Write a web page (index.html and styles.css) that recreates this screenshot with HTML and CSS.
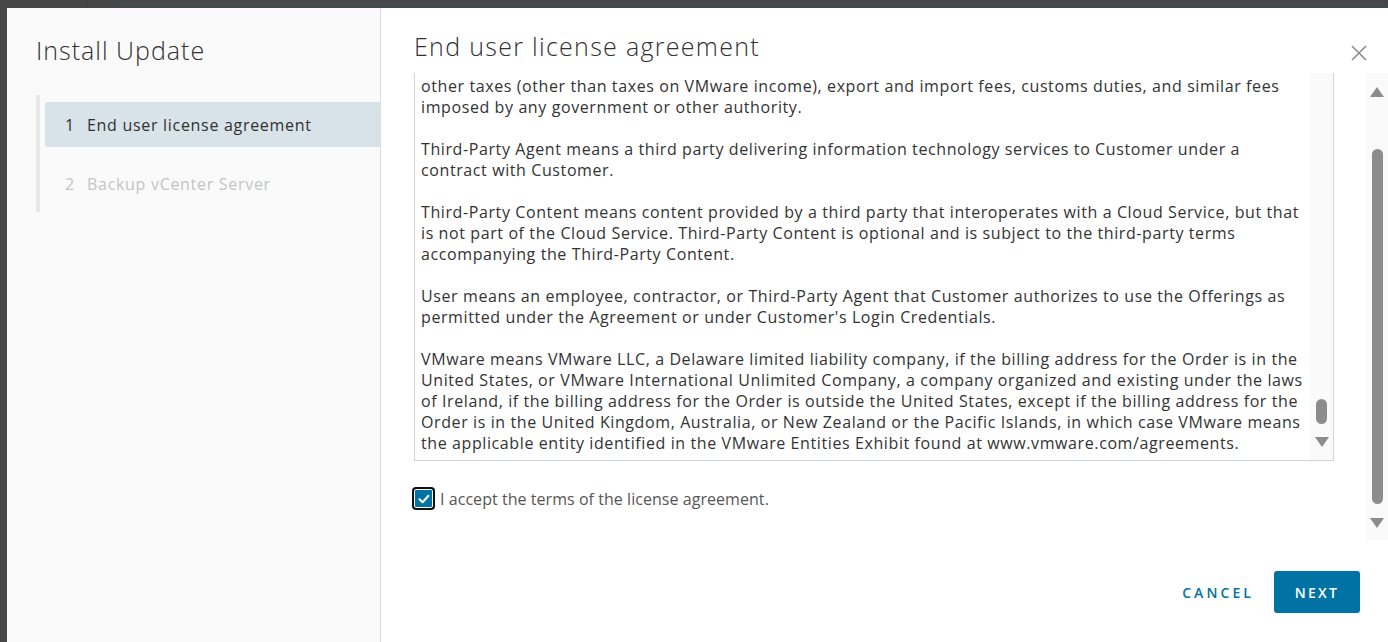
FILE: index.html
```html
<!DOCTYPE html>
<html lang="en">
<head>
<meta charset="utf-8">
<title>Install Update</title>
<link rel="stylesheet" href="styles.css">
</head>
<body>
<div class="backdrop">
  <div class="bd-line"></div>
  <div class="bd-box"></div>
</div>
<div class="modal">
  <aside class="sidebar">
    <h1 class="side-title">Install Update</h1>
    <nav class="steps">
      <div class="step active"><span class="num">1</span>End user license agreement</div>
      <div class="step disabled"><span class="num">2</span>Backup vCenter Server</div>
    </nav>
  </aside>
  <main class="main">
    <header class="main-head">
      <h2 class="main-title">End user license agreement</h2>
      <button class="close" aria-label="Close">
        <svg width="18" height="18" viewBox="0 0 18 18"><path d="M2 2L16 16M16 2L2 16" stroke="#8c8c8c" stroke-width="1.6" fill="none"/></svg>
      </button>
    </header>
    <div class="main-body">
      <div class="scroll-area">
        <div class="eula">
          <div class="eula-text">
            <p>other taxes (other than taxes on VMware income), export and import fees, customs duties, and similar fees<br>imposed by any government or other authority.</p>
            <p>Third-Party Agent means a third party delivering information technology services to Customer under a<br>contract with Customer.</p>
            <p>Third-Party Content means content provided by a third party that interoperates with a Cloud Service, but that<br>is not part of the Cloud Service. Third-Party Content is optional and is subject to the third-party terms<br>accompanying the Third-Party Content.</p>
            <p>User means an employee, contractor, or Third-Party Agent that Customer authorizes to use the Offerings as<br>permitted under the Agreement or under Customer's Login Credentials.</p>
            <p>VMware means VMware LLC, a Delaware limited liability company, if the billing address for the Order is in the<br>United States, or VMware International Unlimited Company, a company organized and existing under the laws<br>of Ireland, if the billing address for the Order is outside the United States, except if the billing address for the<br>Order is in the United Kingdom, Australia, or New Zealand or the Pacific Islands, in which case VMware means<br>the applicable entity identified in the VMware Entities Exhibit found at www.vmware.com/agreements.</p>
          </div>
          <div class="inner-bar">
            <div class="inner-thumb"></div>
            <div class="arrow-down"></div>
          </div>
        </div>
        <label class="accept">
          <span class="checkbox">
            <svg width="14" height="14" viewBox="0 0 14 14"><path d="M2.5 7.2L5.6 10.2L11.5 3.8" stroke="#fff" stroke-width="2" fill="none" stroke-linecap="round" stroke-linejoin="round"/></svg>
          </span>
          I accept the terms of the license agreement.
        </label>
      </div>
      <div class="outer-bar">
        <div class="arrow-up"></div>
        <div class="outer-thumb"></div>
        <div class="arrow-down"></div>
      </div>
    </div>
    <footer class="main-foot">
      <button class="btn btn-link">CANCEL</button>
      <button class="btn btn-primary">NEXT</button>
    </footer>
  </main>
</div>
</body>
</html>
```
FILE: styles.css
```css
* { box-sizing: border-box; }
html, body { margin: 0; padding: 0; }
body {
  background: #474747;
  width: 1388px;
  height: 642px;
  overflow: hidden;
  font-family: "Open Sans", "Liberation Sans", sans-serif;
  color: #333;
}
.backdrop {
  height: 8px;
  display: flex;
  align-items: flex-end;
}
.bd-line {
  width: 1px;
  height: 8px;
  margin-left: 86px;
  background: #3e3e3e;
}
.bd-box {
  margin-left: 29px;
  width: 1271px;
  height: 4px;
  border-top: 1px solid #3a5357;
  border-left: 1px solid #3a5357;
  border-right: 1px solid #3a5357;
  border-radius: 3px 3px 0 0;
}
.modal {
  margin-left: 7px;
  width: 1381px;
  height: 634px;
  display: flex;
  background: #fff;
}
.sidebar {
  width: 374px;
  background: #fafafa;
  border-right: 1px solid #dcdcdc;
  padding: 26px 0 0 29px;
}
.side-title {
  margin: 0;
  font-size: 25px;
  font-weight: 300;
  letter-spacing: 1px;
  line-height: 32px;
  color: #313131;
}
.steps {
  margin-top: 29px;
  border-left: 4px solid #e8e8e8;
  padding: 7px 0 6px 5px;
  display: flex;
  flex-direction: column;
  gap: 14px;
}
.step {
  height: 45px;
  display: flex;
  align-items: center;
  padding-left: 20px;
  font-size: 16px;
  letter-spacing: 0.7px;
  color: #313131;
  border-radius: 3px 0 0 3px;
}
.step .num { width: 22px; letter-spacing: 0; }
.step.active { background: #d8e3e9; }
.step.disabled { color: #c4c4c4; }
.main {
  flex: 1;
  display: flex;
  flex-direction: column;
}
.main-head {
  height: 65px;
  display: flex;
  align-items: flex-start;
  justify-content: space-between;
  padding: 22px 20px 0 33px;
}
.main-title {
  margin: 0;
  font-size: 25px;
  font-weight: 300;
  letter-spacing: 1.3px;
  line-height: 32px;
  color: #313131;
}
.close {
  background: none;
  border: 0;
  padding: 0;
  margin-top: 14px;
  width: 18px;
  height: 18px;
}
.main-body {
  height: 467px;
  display: flex;
}
.scroll-area {
  flex: 1;
  padding-left: 33px;
}
.eula {
  width: 920px;
  height: 388px;
  border: 1px solid #cfd6da;
  border-top: 0;
  display: flex;
}
.eula-text {
  flex: 1;
  padding: 3px 0 0 6px;
  font-size: 16px;
  letter-spacing: 0.6px;
  line-height: 21px;
  color: #333;
  white-space: nowrap;
  overflow: hidden;
}
.eula-text p { margin: 0 0 21px; }
.inner-bar {
  width: 23px;
  background: #fafafa;
  display: flex;
  flex-direction: column;
  align-items: center;
  justify-content: flex-end;
  padding-bottom: 13px;
}
.inner-thumb {
  width: 11px;
  height: 25px;
  border-radius: 6px;
  background: #8c8c8c;
  margin-bottom: 13px;
}
.arrow-down, .arrow-up {
  width: 0;
  height: 0;
  border-left: 7px solid transparent;
  border-right: 7px solid transparent;
}
.arrow-down { border-top: 10px solid #8c8c8c; }
.arrow-up { border-bottom: 10px solid #8c8c8c; }
.accept {
  margin-top: 26px;
  display: flex;
  align-items: center;
  gap: 5px;
  font-size: 16px;
  letter-spacing: 0.05px;
  color: #565656;
  margin-left: -2px;
}
.checkbox {
  width: 23px;
  height: 23px;
  border: 2px solid #111;
  border-radius: 4px;
  background: #0072a3;
  box-shadow: inset 0 0 0 1px #fff;
  display: flex;
  align-items: center;
  justify-content: center;
}
.outer-bar {
  width: 22px;
  background: #fafafa;
  display: flex;
  flex-direction: column;
  align-items: center;
  padding-top: 14px;
}
.outer-thumb {
  width: 11px;
  height: 355px;
  border-radius: 6px;
  background: #8c8c8c;
  margin: 52px 0 14px;
}
.main-foot {
  flex: 1;
  display: flex;
  justify-content: flex-end;
  align-items: flex-start;
  padding: 31px 28px 0 0;
  gap: 10px;
}
.btn {
  font-family: "Open Sans", "Liberation Sans", sans-serif;
  font-size: 14px;
  font-weight: 600;
  letter-spacing: 0.16em;
  height: 42px;
  border: 0;
  border-radius: 3px;
  padding: 0 12px;
  cursor: pointer;
}
.btn-link { background: none; color: #0072a3; letter-spacing: 0.22em; padding: 0 10px 0 12px; }
.btn-primary { background: #0072a3; color: #fff; width: 86px; }
```
